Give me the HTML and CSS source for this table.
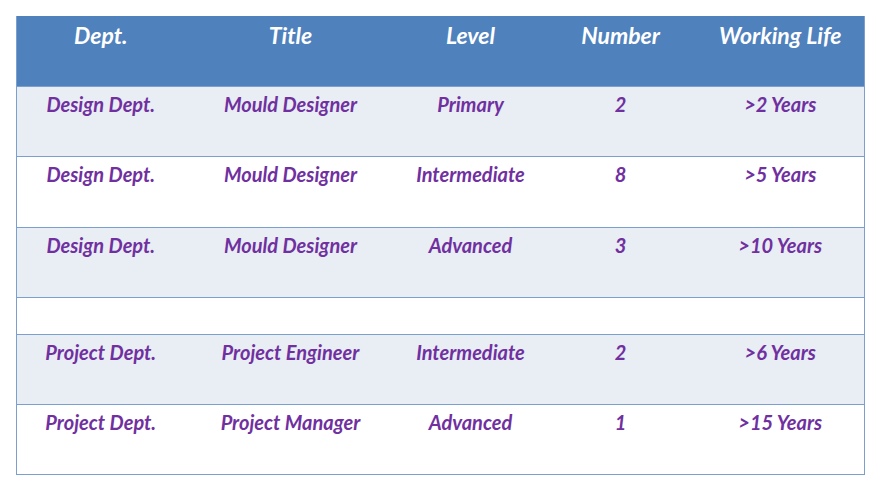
FILE: index.html
```html
<!DOCTYPE html>
<html>
<head>
<meta charset="utf-8">
<link rel="stylesheet" href="styles.css">
</head>
<body>
<table class="grid">
  <colgroup>
    <col class="c1"><col class="c2"><col class="c3"><col class="c4"><col class="c5">
  </colgroup>
  <thead>
    <tr class="head">
      <th>Dept.</th><th>Title</th><th>Level</th><th>Number</th><th>Working Life</th>
    </tr>
  </thead>
  <tbody>
    <tr class="row alt"><td>Design Dept.</td><td>Mould Designer</td><td>Primary</td><td>2</td><td>&gt;2 Years</td></tr>
    <tr class="row tall"><td>Design Dept.</td><td>Mould Designer</td><td>Intermediate</td><td>8</td><td>&gt;5 Years</td></tr>
    <tr class="row alt"><td>Design Dept.</td><td>Mould Designer</td><td>Advanced</td><td>3</td><td>&gt;10 Years</td></tr>
    <tr class="row empty"><td></td><td></td><td></td><td></td><td></td></tr>
    <tr class="row alt"><td>Project Dept.</td><td>Project Engineer</td><td>Intermediate</td><td>2</td><td>&gt;6 Years</td></tr>
    <tr class="row"><td>Project Dept.</td><td>Project Manager</td><td>Advanced</td><td>1</td><td>&gt;15 Years</td></tr>
  </tbody>
</table>
</body>
</html>
```
FILE: styles.css
```css
html, body {
  margin: 0;
  padding: 0;
  background: #ffffff;
}
body {
  padding: 16px 0 0 16px;
}
.grid {
  border-collapse: collapse;
  table-layout: fixed;
  width: 848px;
  font-family: Lato, "Liberation Sans", sans-serif;
  font-style: italic;
  font-weight: bold;
  border-left: 1px solid #7ba0cf;
  border-right: 1px solid #7ba0cf;
}
.c1 { width: 168px; }
.c2 { width: 212px; }
.c3 { width: 148px; }
.c4 { width: 152px; }
.c5 { width: 168px; }
.head th {
  background: #4f81bd;
  color: #ffffff;
  font-size: 23px;
  height: 70px;
  padding: 0;
  vertical-align: top;
  text-align: center;
  line-height: 38px;
  border-bottom: 1px solid #7ba0cf;
  font-weight: bold;
}
.row td {
  height: 69px;
  padding: 0;
  vertical-align: top;
  text-align: center;
  color: #7030a0;
  font-size: 20px;
  line-height: 34px;
  border-bottom: 1px solid #7ba0cf;
  background: #ffffff;
}
.row.alt td {
  background: #e9edf4;
}
.row.tall td {
  height: 70px;
}
.row.empty td {
  height: 36px;
}
```
